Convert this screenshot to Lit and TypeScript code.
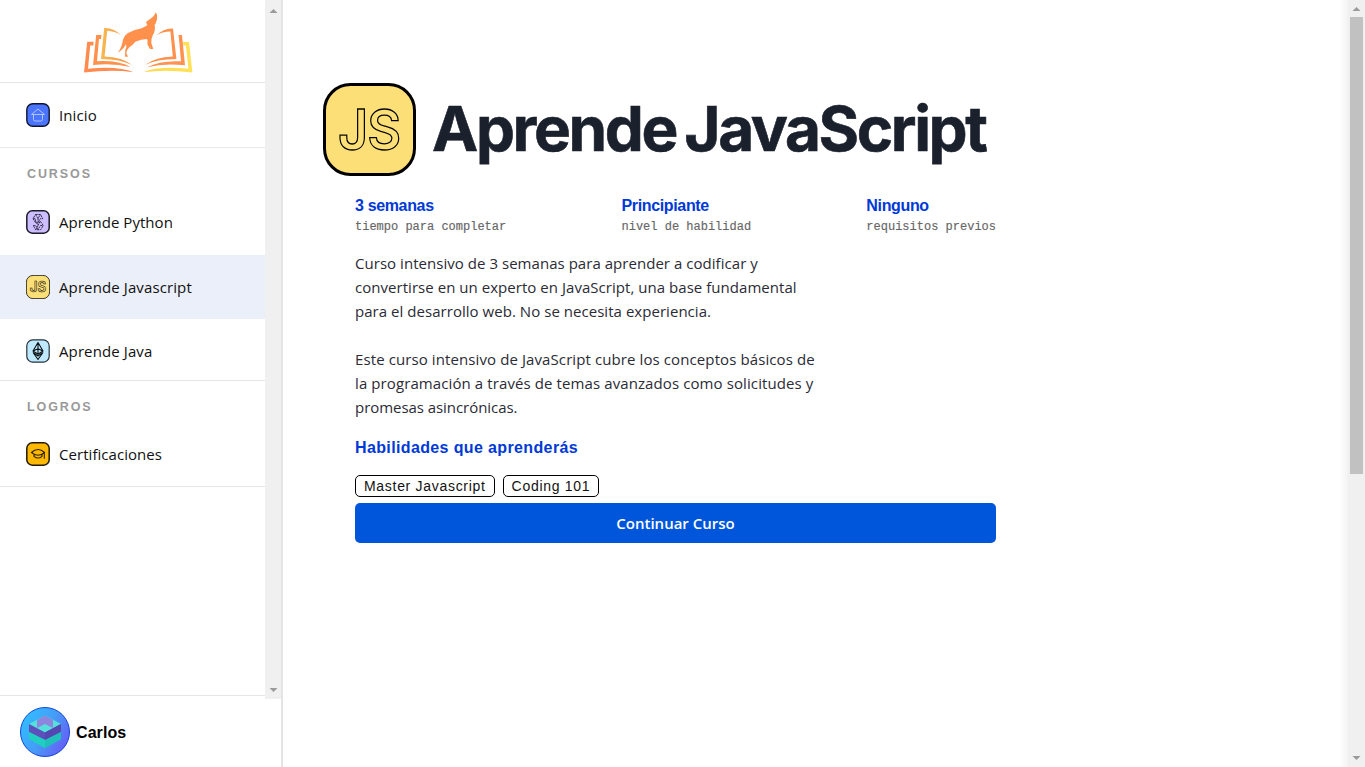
import { LitElement, html, svg, css } from "lit";
import { customElement, property } from "lit/decorators.js";
import { classMap } from "lit/directives/class-map.js";

const jsTile = svg`
  <rect x="1.5" y="1.5" width="90" height="90" rx="26" fill="#fddf78" stroke="#000" stroke-width="3"/>
  <text transform="translate(15 67) scale(.930 1)" class="js">JS</text>`;

const icons: Record<string, unknown> = {
  home: html`<svg viewBox="0 0 24 24" width="24" height="24">
    <rect x=".8" y=".8" width="22.4" height="22.4" rx="6" fill="#4b74ff" stroke="#10152e" stroke-width="1.4"/>
    <path d="M5.500 11.500 12 6l6.500 5.500H5.500zM7.500 11.500v4.800q0 1.700 1.700 1.700h5.600q1.700 0 1.700-1.700v-4.800" fill="none" stroke="#b8ceff" stroke-width=".9"/>
  </svg>`,
  python: html`<svg viewBox="0 0 24 24" width="24" height="24">
    <rect x=".8" y=".8" width="22.4" height="22.4" rx="5.500" fill="#cdbfff" stroke="#1d1a2b" stroke-width="1.5"/>
    <path d="M9.500 4.500h5l2.300 4.200-2.500 0L12 13l-2.500-.5L7 8.700zM9.500 4.500 12 8.500l2.300-4M7 8.700h2.300l.2 3.800M12 8.500v4.300M14.300 11.200 12 15.300l-2.300-4M14.500 11.500l2.700 4-2.500 4.200h-5L7.200 15.500h2.500L12 19.500l2.500-4h2.700M9.700 19.700l2.300-4" fill="none" stroke="#2b2540" stroke-width=".9" stroke-dasharray="2.200 .6"/>
  </svg>`,
  javascript: html`<svg class="small" viewBox="0 0 93 93" width="24" height="24">${jsTile}</svg>`,
  java: html`<svg viewBox="0 0 24 24" width="24" height="24">
    <rect x=".8" y=".8" width="22.4" height="22.400" rx="6" fill="#bfe9ff" stroke="#26323a" stroke-width="1.200"/>
    <path d="M12 3.500 17 12l-5 3.300L7 12zM12 3.500v11.800M7 12l5-2.200 5 2.200M7.200 13.800 12 20.500l4.800-6.700L12 17z" fill="none" stroke="#0c1216" stroke-width="1.100" stroke-linejoin="round"/>
  </svg>`,
  cap: html`<svg viewBox="0 0 24 24" width="24" height="24">
    <rect x=".8" y=".8" width="22.4" height="22.4" rx="5.500" fill="#ffb800" stroke="#1f1a0a" stroke-width="1.500"/>
    <path d="M5.500 10.500Q8.500 7.500 12 7.500t6.500 3Q15.500 13.200 12 13.200T5.500 10.500zM8 12.500v1.800q4 3.500 8 0v-1.800M18.300 10.700v6" fill="none" stroke="#2a2000" stroke-width="1.100"/>
  </svg>`,
};

const iconStyles = css`
  svg { display: block; }
  .js { font: 600 56px Inter, sans-serif; letter-spacing: -1px; fill: none; stroke: #000; stroke-width: 1.3; }
  .small .js { stroke-width: 2.200; }
`;

@customElement("nav-item")
class NavItem extends LitElement {
  @property() icon = "";
  @property() label = "";
  @property({ type: Boolean }) active = false;
  static styles = [iconStyles, css`
    :host { display: block; }
    .row { height: 64px; box-sizing: border-box; display: flex; align-items: center; gap: 9px; padding-left: 26px;
      font: 15px/24px "Open Sans", sans-serif; letter-spacing: .110px; color: #111; white-space: nowrap; }
    .raised { padding-bottom: 2px; letter-spacing: .050px; }
    .active { background: #ebeff9; }
  `];
  render() {
    const raised = this.icon === "python" || this.icon === "cap";
    return html`<div class=${classMap({ row: true, active: this.active, raised })}>${icons[this.icon]}<span>${this.label}</span></div>`;
  }
}

@customElement("scroll-bar")
class ScrollBar extends LitElement {
  static styles = css`
    :host { display: flex; flex-direction: column; justify-content: space-between; align-items: center;
      box-sizing: border-box; background: #f0f0f0; }
    svg { display: block; flex: none; }
    ::slotted(*) { margin-bottom: auto; }
  `;
  render() {
    return html`
      <svg width="17" height="17"><path d="M4.500 11 8.500 7l4 4z" fill="#9b9b9b"/></svg>
      <slot></slot>
      <svg width="17" height="17"><path d="M4.500 6h8l-4 4z" fill="#9b9b9b"/></svg>`;
  }
}

@customElement("app-root")
class AppRoot extends LitElement {
  static styles = [iconStyles, css`
    :host { display: flex; width: 100%; height: 767px; overflow: hidden; background: #fff; font-family: "Liberation Sans", Arial, sans-serif; }
    .side { width: 281px; flex: none; border-right: 2px solid #e4e4e6; display: flex; flex-direction: column; }
    .top { display: flex; height: 699px; flex: none; }
    nav { width: 265px; height: 695px; border-bottom: 1px solid #e6e6e6; }
    .sb1 { width: 16px; padding-top: 2px; }
    .logo { height: 82px; border-bottom: 1px solid #e6e6e6; }
    .home { height: 64px; border-bottom: 1px solid #e9e9e9; }
    .group { border-bottom: 1px solid #e6e6e6; box-sizing: border-box; }
    .courses { height: 233px; }
    .awards { height: 106px; }
    h3 { margin: 0; padding: 17px 0 0 27px; height: 43px; box-sizing: border-box; font: 700 12.500px/18px "Liberation Sans", sans-serif; letter-spacing: 1.900px; color: #999; }
    .awards h3 { height: 42px; }
    .user { display: flex; align-items: center; gap: 6px; padding: 8px 0 0 20px; font-weight: 700; font-size: 16px; color: #000; }
    .user span { padding-top: 2px; letter-spacing: .080px; }
    main { flex: 1; padding: 82px 0 0 40px; }
    .head { display: flex; align-items: center; gap: 16px; height: 94px; }
    h1 { margin: 0; font: 700 62px/94px Inter, sans-serif; letter-spacing: -2.380px; word-spacing: -4px; color: #1a202c; -webkit-text-stroke: .600px #1a202c; white-space: nowrap; }
    .body { width: 641px; margin-left: 32px; }
    .stats { display: flex; justify-content: space-between; padding-top: 19px; }
    .stat b { display: block; font: 700 16px/21px "Liberation Sans", sans-serif; letter-spacing: -0.350px; color: #0039d7; }
    .stat span { display: block; font: 12px/22px "Liberation Mono", monospace; color: #666; -webkit-text-stroke: .150px #666; white-space: nowrap; }
    p { margin: 0; font: 15px/24px "Open Sans", sans-serif; letter-spacing: .040px; color: #2b2b35; white-space: nowrap; }
    p + p { margin-top: 24px; letter-spacing: .100px; }
    .last { letter-spacing: -.050px; }
    .text { padding-top: 13px; }
    h2 { margin: 17px 0 0; font: 700 16px/24px "Liberation Sans", sans-serif; letter-spacing: .370px; color: #0039d7; }
    .tags { display: flex; gap: 8px; margin-top: 15px; }
    .tag { height: 22px; box-sizing: border-box; border: 1px solid #000; border-radius: 5px; padding: 0 8px; font-size: 14px; line-height: 21px; letter-spacing: .700px; color: #111; white-space: nowrap; }
    .btn { display: block; width: 641px; height: 40px; margin-top: 6px; border: 0; padding: 0; border-radius: 5px; background: #0056db; color: #fff; font: 600 15px/40px "Open Sans", sans-serif; }
    .edge { width: 9px; background: linear-gradient(90deg, #fff, #f3f3f3); }
    .sb2 { width: 17px; }
    .thumb { width: 13px; height: 457px; background: #c1c1c1; }
  `];
  render() {
    return html`
      <aside class="side">
        <div class="top">
          <nav>
            <div class="logo">
              <svg width="265" height="82" viewBox="0 0 265 82">
                <defs>
                  <linearGradient id="a" x1="0" x2="1"><stop offset="0" stop-color="#f5b94f"/><stop offset="1" stop-color="#ff914d"/></linearGradient>
                  <linearGradient id="b" x1="0" x2="1"><stop offset="0" stop-color="#ffd94e"/><stop offset="1" stop-color="#ffe15a"/></linearGradient>
                </defs>
                <path transform="translate(70 0) scale(.3333)" d="M144 158Q154 143 157 130 158 110 174 99 194 88 215 85L232 76 228 66 240 57Q252 51 257 37L261 44Q263 62 254 75 257 93 249 104 243 116 244 130L250 147 240 147 232 132Q235 124 231 117 213 118 196 125 190 133 178 142 170 150 169 159L174 170H165L166 149Q171 139 168 133 162 146 150 154z" fill="#ff914d"/>
                <path d="M101 59l3.200-31q9-.5 16.500 7-6-4-13.500-4.300l-2.600 25.800q18 .5 27.500 8.500-12-6-31.100-6z" fill="url(#a)"/>
                <path d="M93 65l3.200-30h5.300l-.5 4h-2l-2 22.200q21-1.200 33.500 5.800-17-4-37.500-2z" fill="#ff914d"/>
                <path d="M84 72.500 87.200 41.700h6.500l-.5 3.700h-3l-2.200 23.300q31-3 45.500 3.600-21-3-49.500.2z" fill="#ff8b4e"/>
                <path d="M156 35.500q8-7.500 17-7l3.400 30.500q-20 0-31.400 6 10-8 27.800-8.500l-2.400-25q-8 0-14.400 4z" fill="#ff914d"/>
                <path d="M178.500 35h3.500l3 30.300q-21-2.500-38 2 13-7 34-6l-2-22z" fill="#ff9250"/>
                <path d="M183 42h6l3.400 30.500q-28-3.500-49-.2 14-6.500 45-3.600l-2.500-23.200h-2.500z" fill="url(#b)"/>
              </svg>
            </div>
            <div class="home"><nav-item icon="home" label="Inicio"></nav-item></div>
            <div class="group courses">
              <h3>CURSOS</h3>
              <nav-item icon="python" label="Aprende Python"></nav-item>
              <nav-item icon="javascript" label="Aprende Javascript" active></nav-item>
              <nav-item icon="java" label="Aprende Java"></nav-item>
            </div>
            <div class="group awards">
              <h3>LOGROS</h3>
              <nav-item icon="cap" label="Certificaciones"></nav-item>
            </div>
          </nav>
          <scroll-bar class="sb1"></scroll-bar>
        </div>
        <div class="user">
          <svg width="50" height="50" viewBox="0 0 50 50">
            <defs><linearGradient id="g" x1="0" y1=".2" x2="1" y2=".8"><stop offset="0" stop-color="#2fc0ff"/><stop offset=".5" stop-color="#469cf8"/><stop offset="1" stop-color="#6b55f6"/></linearGradient></defs>
            <circle cx="25" cy="25" r="24.500" fill="url(#g)" stroke="#1548d5"/>
            <path d="M9 17 25 8.500 41 17v15L25 41 9 32z" fill="#20c5c9"/>
            <path d="M9 17 25 8.500 41 17 25 25.500z" fill="#55e0dc"/>
            <path d="M17 13 25 8.500l8 4.500v8l-8-4-8 4z" fill="#8e86de"/>
            <path d="M9 17l16 8.500L41 17v8l-16 8-16-8z" fill="#5d50bd"/>
            <path d="M25 25.500 41 17v8l-16 8z" fill="#5547b2"/>
            <path d="M9 25l16 8v8L9 32z" fill="#20cfc2"/><path d="M41 25l-16 8v8l16-9z" fill="#20bfba"/>
          </svg>
          <span>Carlos</span>
        </div>
      </aside>
      <main>
        <div class="head">
          <svg width="93" height="93" viewBox="0 0 93 93">${jsTile}</svg>
          <h1>Aprende JavaScript</h1>
        </div>
        <div class="body">
          <div class="stats">
            <div class="stat"><b>3 semanas</b><span>tiempo para completar</span></div>
            <div class="stat"><b>Principiante</b><span>nivel de habilidad</span></div>
            <div class="stat"><b>Ninguno</b><span>requisitos previos</span></div>
          </div>
          <div class="text">
            <p>Curso intensivo de 3 semanas para aprender a codificar y<br>convertirse en un experto en JavaScript, una base fundamental<br>para el desarrollo web. No se necesita experiencia.</p>
            <p>Este curso intensivo de JavaScript cubre los conceptos básicos de<br>la programación a través de temas avanzados como solicitudes y<br><span class="last">promesas asincrónicas.</span></p>
          </div>
          <h2>Habilidades que aprenderás</h2>
          <div class="tags"><span class="tag">Master Javascript</span><span class="tag">Coding 101</span></div>
          <button class="btn">Continuar Curso</button>
        </div>
      </main>
      <div class="edge"></div>
      <scroll-bar class="sb2"><div class="thumb"></div></scroll-bar>`;
  }
}
